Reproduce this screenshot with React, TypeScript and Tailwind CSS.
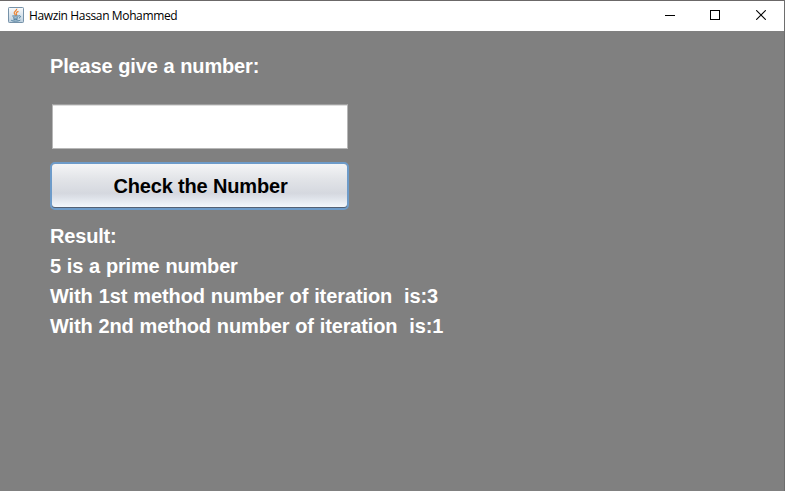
import React from 'react';

function JavaIcon() {
  return (
    <svg width="16" height="16" viewBox="0 0 16 16" className="relative -top-px shrink-0">
      <defs>
        <linearGradient id="tile" x1="0" y1="0" x2="0" y2="1">
          <stop offset="0" stopColor="#fafbfc" />
          <stop offset="1" stopColor="#bccfde" />
        </linearGradient>
      </defs>
      <rect x="0.5" y="0.5" width="15" height="15" rx="0.8" fill="url(#tile)" stroke="#7692a9" />
      <path d="M8.7 1.8C9.3 3.5 5.8 4.3 6.2 6C6.4 7 7.2 7.4 7.4 8.4M10.5 4.4C8.8 5 7.8 5.8 8.4 6.8C8.9 7.5 8.7 8 8.3 8.5" fill="none" stroke="#ed8330" strokeWidth="1.2" />
      <path d="M4.3 9H10.7M5 10.8Q7.5 11.6 10 10.8M5.4 12.2Q7.5 12.8 9.6 12.2M10.7 8.9C13.2 8.2 13 10.6 10.8 11M3.2 13.1C4 14.5 10.5 14.4 12.3 13.1" fill="none" stroke="#457797" strokeWidth="1" />
    </svg>
  );
}

function TitleBar() {
  return (
    <header className="flex h-[31px] shrink-0 items-center border-t border-[#6b6868] bg-white pl-2">
      <JavaIcon />
      <h1 className="ml-[5px] whitespace-pre font-['Open_Sans','Noto_Sans',sans-serif] text-[12px] font-normal leading-4 tracking-[-0.37px] text-black [word-spacing:0px]">Hawzin Hassan Mohammed</h1>
      <div className="ml-auto flex h-7 self-start pr-px">
        <button aria-label="Minimize" className="flex w-[45px] items-center justify-center">
          <svg width="10" height="10" shapeRendering="crispEdges"><path d="M0 5.5H10" stroke="#000" /></svg>
        </button>
        <button aria-label="Maximize" className="flex w-[45px] items-center justify-center">
          <svg width="10" height="10" shapeRendering="crispEdges"><rect x=".5" y=".5" width="9" height="9" fill="none" stroke="#000" /></svg>
        </button>
        <button aria-label="Close" className="flex w-[46px] items-center justify-center pl-0.5">
          <svg width="10" height="10"><path d="M.2 .2L9.8 9.8M9.8 .2L.2 9.8" fill="none" stroke="#000" strokeWidth="1.1" /></svg>
        </button>
      </div>
    </header>
  );
}

export default function App() {
  return (
    <div className="flex h-[491px] w-[785px] flex-col overflow-hidden border-r border-[#6e6e6e] bg-[#808080] font-['Liberation_Sans',Arial,sans-serif] text-[20px] font-bold leading-[30px] tracking-[-0.17px] text-white [word-spacing:0.5px]">
      <TitleBar />
      <main className="flex flex-col items-start pl-[50px] pt-5">
        <label htmlFor="number" className="whitespace-pre">Please give a number:</label>
        <input id="number" className="ml-0.5 mt-[23px] h-[45px] w-[296px] border border-[#b7b7b7] border-t-[#a0a0a0] bg-white px-2 text-black shadow-[inset_0_1px_0_#dedede] outline-none" />
        <button className="mt-[13px] h-[48px] w-[299px] rounded-[5px] border-2 border-[#6d9bc9] bg-[#536174] pb-px">
          <span className="flex h-full items-center justify-center rounded-[3px] bg-[linear-gradient(180deg,#f4f5f6_0%,#e2e4e8_35%,#d5d8df_68%,#dfe3ea_80%,#f4f8fc_100%)] pl-0.5 text-black">Check the Number</span>
        </button>
        <section className="mt-[11px] whitespace-pre">
          <p>Result:</p>
          <p>5 is a prime number</p>
          <p className="tracking-[-0.1px]">With 1st method number of iteration  is:3</p>
          <p className="tracking-[-0.14px]">With 2nd method number of iteration  is:1</p>
        </section>
      </main>
    </div>
  );
}
